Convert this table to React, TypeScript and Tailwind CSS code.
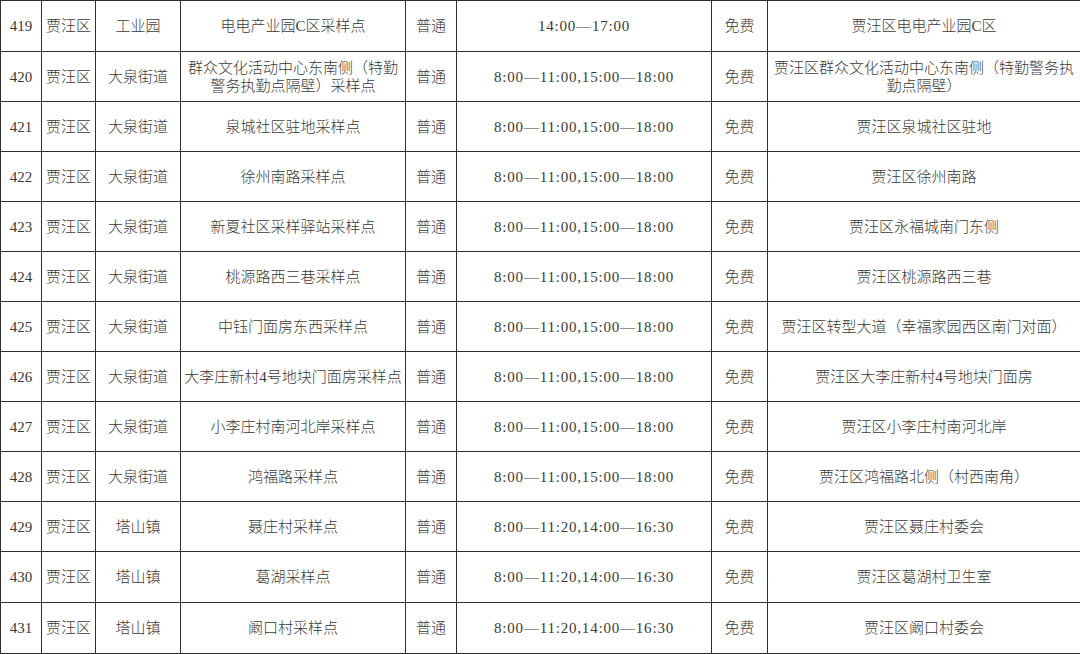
import React from "react";

type Row = {
  no: string;
  town: string;
  site: React.ReactNode;
  time: string;
  addr: React.ReactNode;
  h: string;
};

const T1 = "8:00—11:00,15:00—18:00";
const T2 = "8:00—11:20,14:00—16:30";

const rows: Row[] = [
  { no: "419", town: "工业园", site: "电电产业园C区采样点", time: "14:00—17:00", addr: "贾汪区电电产业园C区", h: "h-[51px]" },
  {
    no: "420",
    town: "大泉街道",
    site: (
      <>
        群众文化活动中心东南侧（特勤
        <br />
        警务执勤点隔壁）采样点
      </>
    ),
    time: T1,
    addr: (
      <>
        贾汪区群众文化活动中心东南侧（特勤警务执
        <br />
        勤点隔壁）
      </>
    ),
    h: "h-[50px]",
  },
  { no: "421", town: "大泉街道", site: "泉城社区驻地采样点", time: T1, addr: "贾汪区泉城社区驻地", h: "h-[50px]" },
  { no: "422", town: "大泉街道", site: "徐州南路采样点", time: T1, addr: "贾汪区徐州南路", h: "h-[50px]" },
  { no: "423", town: "大泉街道", site: "新夏社区采样驿站采样点", time: T1, addr: "贾汪区永福城南门东侧", h: "h-[50px]" },
  { no: "424", town: "大泉街道", site: "桃源路西三巷采样点", time: T1, addr: "贾汪区桃源路西三巷", h: "h-[50px]" },
  { no: "425", town: "大泉街道", site: "中钰门面房东西采样点", time: T1, addr: "贾汪区转型大道（幸福家园西区南门对面）", h: "h-[50px]" },
  { no: "426", town: "大泉街道", site: "大李庄新村4号地块门面房采样点", time: T1, addr: "贾汪区大李庄新村4号地块门面房", h: "h-[50px]" },
  { no: "427", town: "大泉街道", site: "小李庄村南河北岸采样点", time: T1, addr: "贾汪区小李庄村南河北岸", h: "h-[50px]" },
  { no: "428", town: "大泉街道", site: "鸿福路采样点", time: T1, addr: "贾汪区鸿福路北侧（村西南角）", h: "h-[50px]" },
  { no: "429", town: "塔山镇", site: "聂庄村采样点", time: T2, addr: "贾汪区聂庄村委会", h: "h-[50px]" },
  { no: "430", town: "塔山镇", site: "葛湖采样点", time: T2, addr: "贾汪区葛湖村卫生室", h: "h-[51px]" },
  { no: "431", town: "塔山镇", site: "阚口村采样点", time: T2, addr: "贾汪区阚口村委会", h: "h-[51px]" },
];

const cell = "flex items-center justify-center text-center border-r border-[#2e2e2e]";

export default function App() {
  return (
    <div
      lang="zh-CN"
      className="w-[1080px] h-[654px] bg-white overflow-hidden text-[#3a3a3a] text-[15px] leading-[18px] font-light antialiased"
      style={{ fontFamily: '"Liberation Serif", "Noto Sans CJK SC", "Noto Sans CJK TC", serif' }}
    >
      <div className="border-t border-l border-[#2e2e2e] w-[1080px]">
        {rows.map((r) => (
          <div
            key={r.no}
            className={`grid grid-cols-[41px_54px_85px_225px_51px_255px_56px_312px] border-b border-[#2e2e2e] ${r.h}`}
          >
            <div className={cell}>{r.no}</div>
            <div className={cell}>贾汪区</div>
            <div className={cell}>{r.town}</div>
            <div className={cell}>{r.site}</div>
            <div className={cell}>普通</div>
            <div className={`${cell} tracking-[0.8px]`}>{r.time}</div>
            <div className={cell}>免费</div>
            <div className="flex items-center justify-center text-center">{r.addr}</div>
          </div>
        ))}
      </div>
    </div>
  );
}
